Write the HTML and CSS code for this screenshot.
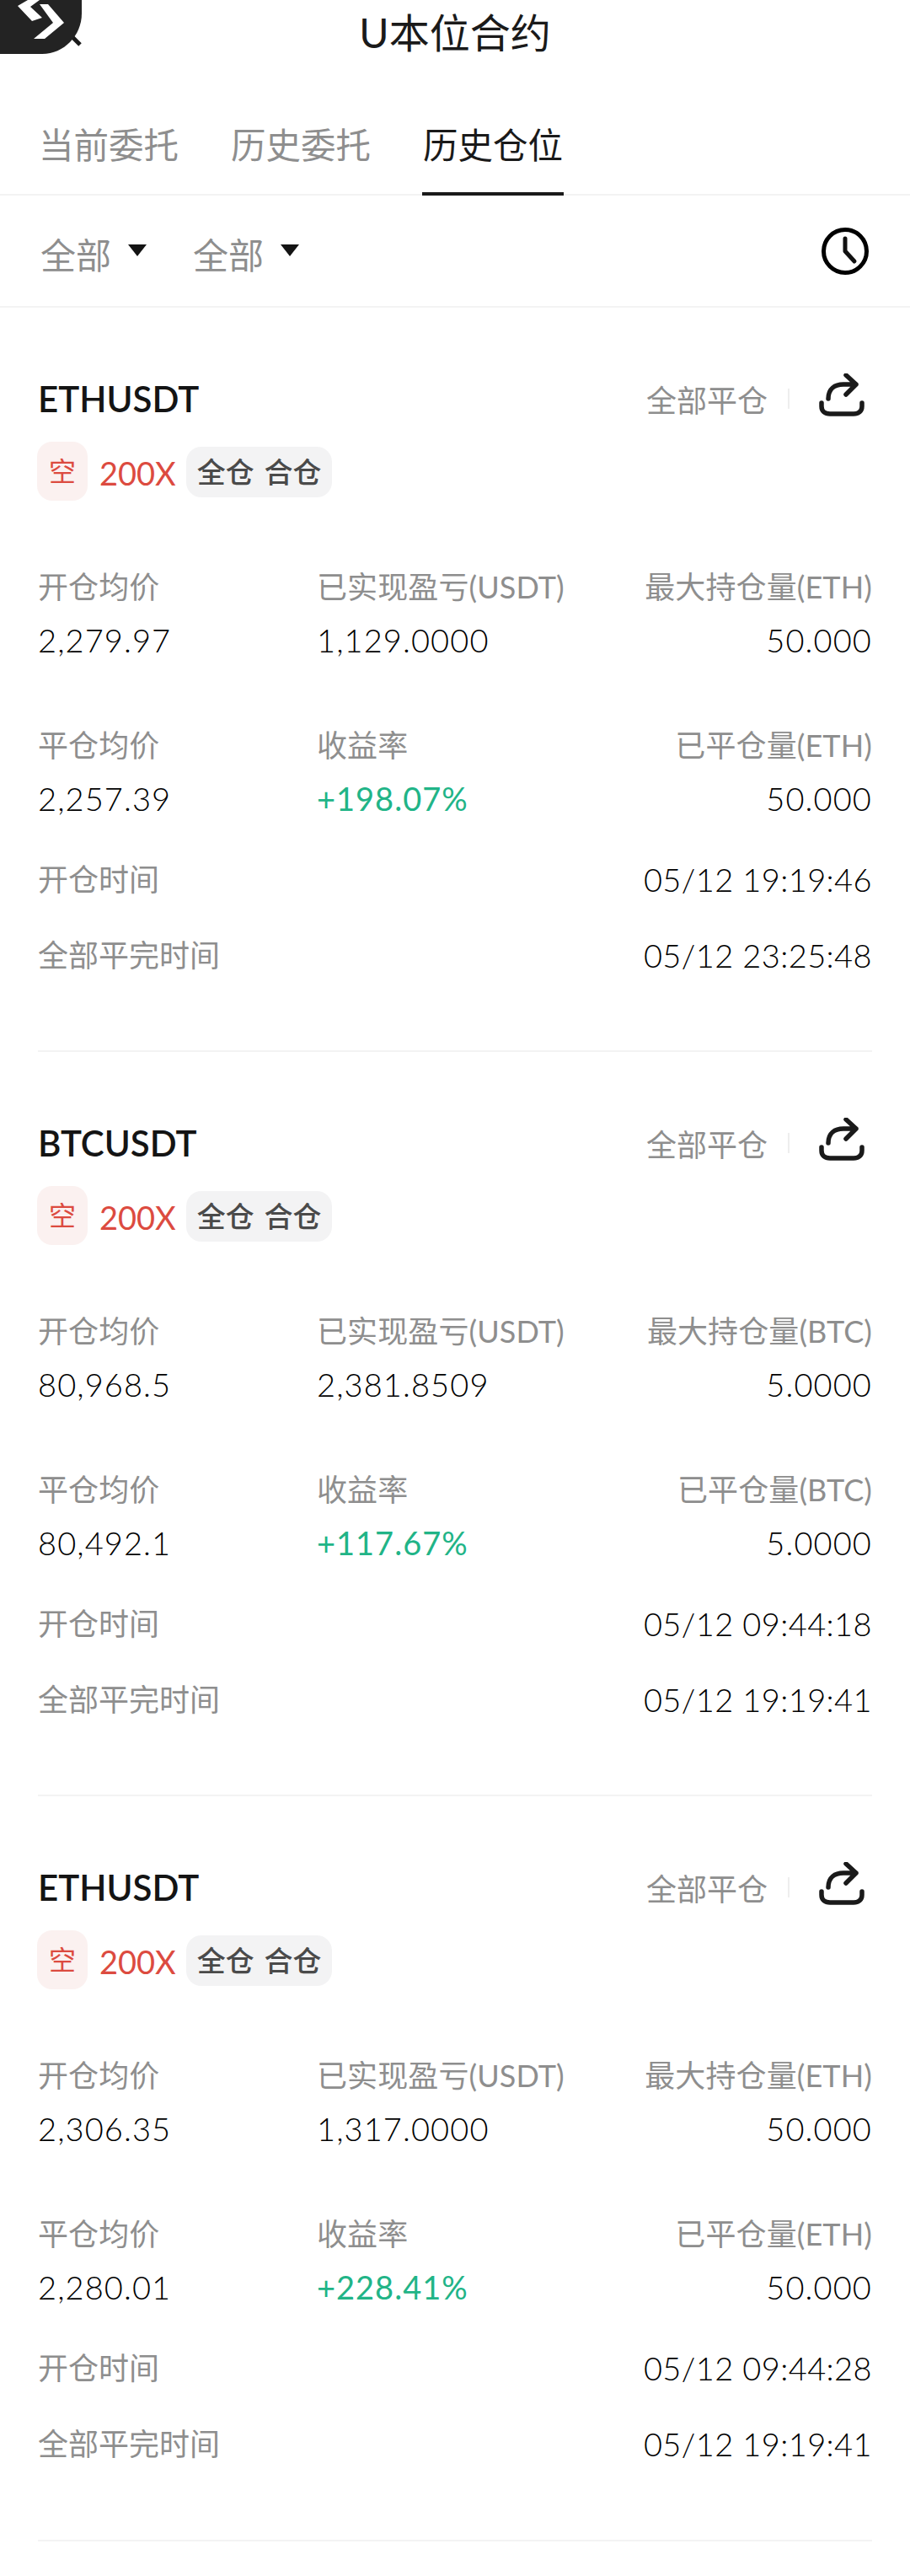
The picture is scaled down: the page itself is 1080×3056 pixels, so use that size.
FILE: index.html
```html
<!doctype html>
<html>
<head>
<meta charset="utf-8">
<link rel="stylesheet" href="styles.css">
</head>
<body>
<div class="page">
	<div class="blob">
		<svg width="100" height="70" viewBox="0 0 100 70">
			<path d="M85 43L95 53" stroke="#1a1a1a" stroke-width="5" fill="none"/>
			<path d="M0 0H97V16C97 42 76 64 50 64H0Z" fill="#232323"/>
			<path d="M21 7L33 0H47L36 8L50 21L38 25Z" fill="#fff"/>
			<path d="M47 5H57L76 27L53 46H40L63 27Z" fill="#fff"/>
		</svg>
	</div>
	<div class="title">U本位合约</div>
	<div class="tabs">
		<span class="tab">当前委托</span>
		<span class="tab">历史委托</span>
		<span class="tab on">历史仓位</span>
	</div>
	<div class="filter">
		<span class="sel">全部<i class="arrow"></i></span>
		<span class="sel">全部<i class="arrow"></i></span>
		<svg class="clock" width="58" height="58" viewBox="0 0 58 58">
			<circle cx="29" cy="29" r="25.5" stroke="#000" stroke-width="5" fill="none"/>
			<path d="M29 14V29L40 41" stroke="#111" stroke-width="5" stroke-linecap="round" stroke-linejoin="round" fill="none"/>
		</svg>
	</div>

	<div class="card">
		<div class="head">
			<span class="name">ETHUSDT</span>
			<span class="close">全部平仓</span>
			<i class="sep"></i>
			<svg class="share" width="56" height="52" viewBox="0 0 56 52">
				<path d="M12 30C12 18 20 13 30 13H45M33 2L45 13L33 25" stroke="#1a1a1a" stroke-width="5.5" stroke-linecap="round" stroke-linejoin="round" fill="none"/>
				<path d="M4 35V39C4 45 8 48 14 48H42C48 48 52 45 52 39V35" stroke="#1a1a1a" stroke-width="5.5" stroke-linecap="round" fill="none"/>
			</svg>
		</div>
		<div class="tags">
			<span class="side">空</span>
			<span class="lev">200X</span>
			<span class="mode">全仓 合仓</span>
		</div>
		<div class="grid">
			<div><p class="lab">开仓均价</p><p class="val">2,279.97</p></div>
			<div><p class="lab">已实现盈亏(USDT)</p><p class="val">1,129.0000</p></div>
			<div class="r"><p class="lab">最大持仓量(ETH)</p><p class="val">50.000</p></div>
			<div><p class="lab">平仓均价</p><p class="val">2,257.39</p></div>
			<div><p class="lab">收益率</p><p class="val up">+198.07%</p></div>
			<div class="r"><p class="lab">已平仓量(ETH)</p><p class="val">50.000</p></div>
		</div>
		<div class="line first"><span class="lab">开仓时间</span><span class="val">05/12 19:19:46</span></div>
		<div class="line"><span class="lab">全部平完时间</span><span class="val">05/12 23:25:48</span></div>
	</div>

	<div class="card">
		<div class="head">
			<span class="name">BTCUSDT</span>
			<span class="close">全部平仓</span>
			<i class="sep"></i>
			<svg class="share" width="56" height="52" viewBox="0 0 56 52">
				<path d="M12 30C12 18 20 13 30 13H45M33 2L45 13L33 25" stroke="#1a1a1a" stroke-width="5.5" stroke-linecap="round" stroke-linejoin="round" fill="none"/>
				<path d="M4 35V39C4 45 8 48 14 48H42C48 48 52 45 52 39V35" stroke="#1a1a1a" stroke-width="5.5" stroke-linecap="round" fill="none"/>
			</svg>
		</div>
		<div class="tags">
			<span class="side">空</span>
			<span class="lev">200X</span>
			<span class="mode">全仓 合仓</span>
		</div>
		<div class="grid">
			<div><p class="lab">开仓均价</p><p class="val">80,968.5</p></div>
			<div><p class="lab">已实现盈亏(USDT)</p><p class="val">2,381.8509</p></div>
			<div class="r"><p class="lab">最大持仓量(BTC)</p><p class="val">5.0000</p></div>
			<div><p class="lab">平仓均价</p><p class="val">80,492.1</p></div>
			<div><p class="lab">收益率</p><p class="val up">+117.67%</p></div>
			<div class="r"><p class="lab">已平仓量(BTC)</p><p class="val">5.0000</p></div>
		</div>
		<div class="line first"><span class="lab">开仓时间</span><span class="val">05/12 09:44:18</span></div>
		<div class="line"><span class="lab">全部平完时间</span><span class="val">05/12 19:19:41</span></div>
	</div>

	<div class="card">
		<div class="head">
			<span class="name">ETHUSDT</span>
			<span class="close">全部平仓</span>
			<i class="sep"></i>
			<svg class="share" width="56" height="52" viewBox="0 0 56 52">
				<path d="M12 30C12 18 20 13 30 13H45M33 2L45 13L33 25" stroke="#1a1a1a" stroke-width="5.5" stroke-linecap="round" stroke-linejoin="round" fill="none"/>
				<path d="M4 35V39C4 45 8 48 14 48H42C48 48 52 45 52 39V35" stroke="#1a1a1a" stroke-width="5.5" stroke-linecap="round" fill="none"/>
			</svg>
		</div>
		<div class="tags">
			<span class="side">空</span>
			<span class="lev">200X</span>
			<span class="mode">全仓 合仓</span>
		</div>
		<div class="grid">
			<div><p class="lab">开仓均价</p><p class="val">2,306.35</p></div>
			<div><p class="lab">已实现盈亏(USDT)</p><p class="val">1,317.0000</p></div>
			<div class="r"><p class="lab">最大持仓量(ETH)</p><p class="val">50.000</p></div>
			<div><p class="lab">平仓均价</p><p class="val">2,280.01</p></div>
			<div><p class="lab">收益率</p><p class="val up">+228.41%</p></div>
			<div class="r"><p class="lab">已平仓量(ETH)</p><p class="val">50.000</p></div>
		</div>
		<div class="line first"><span class="lab">开仓时间</span><span class="val">05/12 09:44:28</span></div>
		<div class="line"><span class="lab">全部平完时间</span><span class="val">05/12 19:19:41</span></div>
	</div>
</div>
</body>
</html>
```

FILE: styles.css
```css
* {margin:0; padding:0; box-sizing:border-box;}
html, body {background:#fff;}
body {font-family:"Lato","Noto Sans CJK SC",sans-serif; color:#1a1a1a;}
.page {width:1080px; height:3056px; overflow:hidden; position:relative;}

.blob {position:absolute; left:0; top:0; line-height:0;}

.title {height:84px; line-height:78px; text-align:center; font-size:48px;}

.tabs {height:148px; padding:0 46px; display:flex; gap:62px; border-bottom:2px solid #f3f3f3;}
.tab {height:148px; padding-top:52px; line-height:72px; font-size:41.5px; color:#8e8e8e;}
.tab.on {color:#1a1a1a; border-bottom:4px solid #1a1a1a; padding-left:1px; padding-right:1px; margin-left:-1px;}

.filter {height:133px; padding:0 48px 0 48px; display:flex; align-items:center; border-bottom:2px solid #f3f3f3;}
.sel {display:flex; align-items:center; width:181px; padding-top:6px; font-size:42px; color:#8e8e8e;}
.arrow {display:block; width:0; height:0; margin:-8px 0 0 20px; border:11px solid transparent; border-top:14px solid #141414; border-bottom:0;}
.clock {margin-left:auto;}

.card {height:883.2px; margin:0 45px; padding-top:83px; border-bottom:2px solid #f3f3f3;}
.head {height:50px; display:flex; align-items:center;}
.name {font-size:42px; font-weight:600; margin-right:auto; color:#141414;}
.close {font-size:36px; color:#8e8e8e;}
.sep {width:2px; height:24px; margin:0 34px 0 24px; background:#eee;}
.share {margin:-8px 8px 0 0;}

.tags {height:70px; margin-top:26px; display:flex; align-items:center;}
.side {width:60px; height:70px; line-height:70px; text-align:center; margin-left:-1px; border-radius:18px; background:#fbf1f0; color:#dc4b40; font-size:32px;}
.lev {margin:3px 0 0 14px; color:#dc4b40; font-size:38px;}
.mode {margin:2px 0 0 12px; height:60px; line-height:60px; padding:0 13px; border-radius:18px; background:#f3f3f4; color:#4a4a4a; font-size:34px; font-weight:500; word-spacing:3px;}

.grid {margin-top:77px; display:grid; grid-template-columns:331px 330px 1fr; row-gap:75px;}
.r {text-align:right;}
.lab {font-size:36px; line-height:50px; color:#8e8e8e;}
.grid .lab {letter-spacing:0.1px;}
.val {font-size:38px; line-height:50px; color:#000; font-weight:300; letter-spacing:0.4px;}
.grid .val {margin-top:13px; letter-spacing:1.1px;}
.grid .up {color:#21b487; font-weight:400; letter-spacing:1px;}

.line {display:flex; justify-content:space-between; margin-top:40px;}
.line.first {margin-top:46px;}
```
